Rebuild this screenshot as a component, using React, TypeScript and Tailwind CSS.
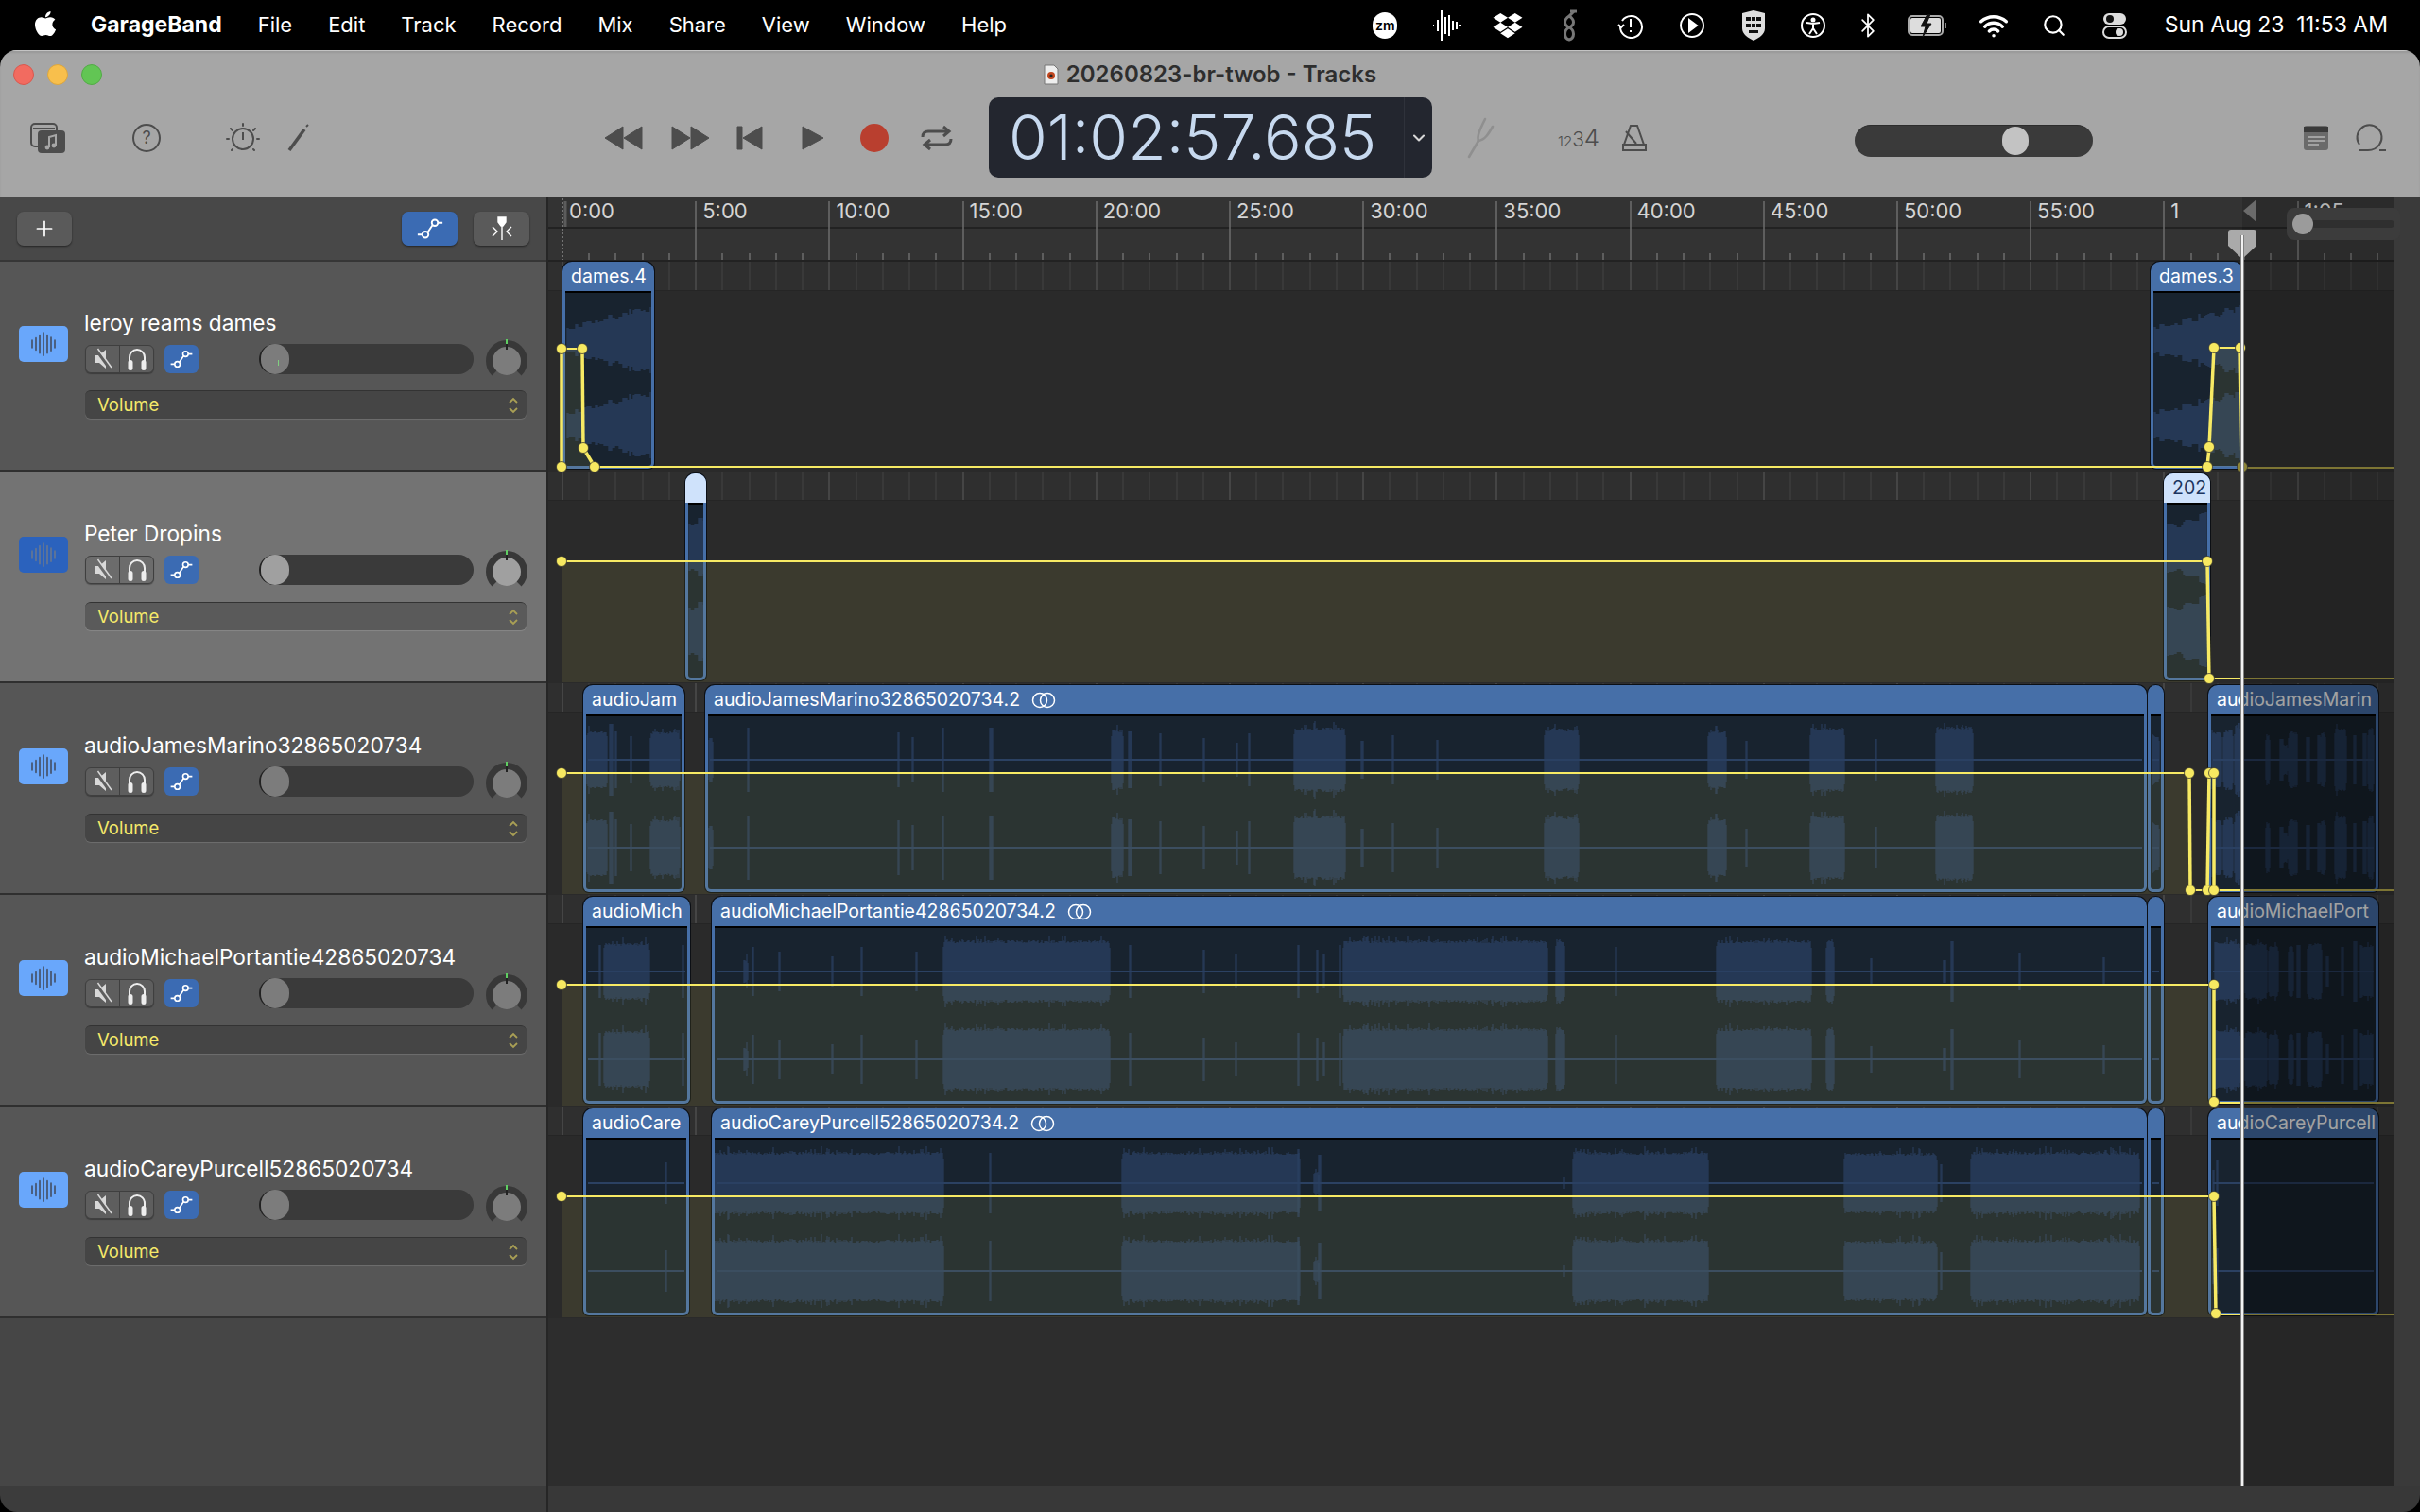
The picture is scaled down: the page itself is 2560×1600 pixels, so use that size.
import { FaApple, FaDropbox } from "react-icons/fa";
import { Bluetooth, Search, Wifi, Plus, ChevronDown } from "lucide-react";

const PLAYHEAD = 2372;
const CANVAS_LEFT = 580;
const CANVAS_RIGHT = 2533;

const WAVE = "#2b4162";

type Span = [number, number, number, number?];

type RegionData = {
  name: string;
  x: number;
  y: number;
  w: number;
  h: number;
  link?: boolean;
  selected?: boolean;
  centers?: [number, number];
  baseline?: boolean;
  blocky?: boolean;
  spans?: Span[];
};

function rng(seed: number) {
  let s = seed;
  return () => {
    s = (s * 16807) % 2147483647;
    return s / 2147483647;
  };
}

function wavePath(r: RegionData) {
  const [c1, c2] = r.centers ?? [79, 172];
  const rand = rng(r.x * 7 + r.y + 11);
  let d = "";
  for (const [a, b, amp0, amp1] of r.spans ?? []) {
    if (r.blocky) {
      // stepped look on the loud stems
      let x = a;
      while (x <= b) {
        const w = 2 + Math.floor(rand() * 4);
        const t = (x - a) / (b - a);
        const amp = amp1 === undefined ? amp0 : amp0 + (amp1 - amp0) * t;
        const top = Math.round(amp * (0.78 + rand() * 0.3));
        for (let i = 0; i < w && x + i <= b; i++) {
          d += `M${x + i} ${r.y + c1 - top}V${r.y + c1 + top}M${x + i} ${r.y + c2 - top}V${r.y + c2 + top}`;
        }
        x += w;
      }
      continue;
    }
    for (let x = a; x <= b; x += 1) {
      const big = b - a > 3;
      let top = amp0;
      if (big) {
        const edge = Math.min(1, Math.min(x - a, b - x) / 4 + 0.82);
        const n = rand();
        top = amp0 * edge * (0.9 + rand() * 0.1) + (n < 0.14 ? n * 50 : 0);
      }
      top = Math.round(top);
      d += `M${x} ${r.y + c1 - top}V${r.y + c1 + top}M${x} ${r.y + c2 - top}V${r.y + c2 + top}`;
    }
  }
  return d;
}

function spikes(xs: number[], amp: number): Span[] {
  return xs.map((x, i) => [x, x + 1, amp - (i % 3) * 5]);
}

// long regions were read off a crop scaled 1.005, bring the x values back
function unscale(spans: Span[]): Span[] {
  return spans.map(([a, b, c, d]) => [740 + Math.round((a - 740) / 1.005), 740 + Math.round((b - 740) / 1.005), c, d]);
}

const laneTops = [277, 499, 723, 947, 1171];

const lanes: RegionData[][] = [
  [
    { name: "dames.4", x: 595, y: 277, w: 97, h: 219, centers: [83, 173], blocky: true, spans: [[600, 688, 13, 38]] },
    { name: "dames.3", x: 2275, y: 277, w: 98, h: 219, centers: [83, 173], blocky: true, spans: [[2279, 2372, 14, 38]] },
  ],
  [
    { name: "", x: 725, y: 501, w: 22, h: 219, selected: true, centers: [78, 167], blocky: true, spans: [[729, 744, 24, 34]] },
    { name: "202", x: 2289, y: 501, w: 49, h: 219, selected: true, centers: [79, 167], blocky: true, spans: [[2293, 2334, 24, 38]] },
  ],
  [
    {
      name: "audioJam", x: 617, y: 725, w: 107, h: 219, baseline: true,
      spans: [[621, 642, 30], [645, 648, 38], ...spikes([651, 667], 30), [688, 719, 30]],
    },
    {
      name: "audioJamesMarino32865020734.2", x: 746, y: 725, w: 1525, h: 219, link: true, baseline: true,
      spans: unscale([
        [750, 754, 24],
        ...spikes([791, 951, 966, 998], 34),
        [1049, 1052, 34], [1178, 1190, 32], [1196, 1199, 30],
        ...spikes([1229, 1276, 1311, 1324], 28),
        [1372, 1426, 34], [1444, 1446, 20],
        ...spikes([1477, 1524], 26),
        [1638, 1675, 33], [1812, 1831, 31], [1853, 1854, 20],
        [1921, 1957, 34], [1990, 1991, 22], [2055, 2094, 35],
      ]),
    },
    { name: "", x: 2272, y: 725, w: 17, h: 219, baseline: true, spans: [[2277, 2284, 26]] },
    {
      name: "audioJamesMarin", x: 2336, y: 725, w: 180, h: 219, baseline: true,
      spans: [
        [2340, 2350, 30], [2352, 2362, 32], [2364, 2371, 36], [2397, 2401, 28],
        [2412, 2415, 22], [2416, 2420, 16], [2421, 2430, 30], [2440, 2443, 24],
        [2452, 2454, 26], [2455, 2460, 30], [2470, 2482, 34], [2490, 2492, 26],
        [2500, 2503, 28], [2505, 2511, 34],
      ],
    },
  ],
  [
    {
      name: "audioMich", x: 617, y: 949, w: 113, h: 219, baseline: true,
      spans: [[634, 635, 28], [639, 687, 30], [722, 723, 28]],
    },
    {
      name: "audioMichaelPortantie42865020734.2", x: 753, y: 949, w: 1518, h: 219, link: true, baseline: true,
      spans: unscale([
        [787, 791, 12],
        ...spikes([796, 824, 881, 912, 970], 26),
        [999, 1176, 33],
        ...spikes([1197, 1276, 1310, 1376, 1396, 1403, 1420], 28),
        [1424, 1641, 33], [1651, 1660, 34],
        ...spikes([1714], 26),
        [1821, 1922, 33], [1938, 1946, 34],
        [1985, 1986, 14],
        [2063, 2065, 12], [2071, 2073, 32],
        ...spikes([2143, 2232], 20),
      ]),
    },
    { name: "", x: 2272, y: 949, w: 17, h: 219, baseline: true },
    {
      name: "audioMichaelPort", x: 2336, y: 949, w: 180, h: 219, baseline: true,
      spans: [
        [2343, 2370, 32], [2375, 2398, 30], [2400, 2410, 28], [2421, 2426, 28],
        [2430, 2433, 28], [2441, 2456, 30], [2461, 2463, 16], [2477, 2479, 26],
        [2490, 2493, 32], [2497, 2510, 28],
      ],
    },
  ],
  [
    {
      name: "audioCare", x: 617, y: 1173, w: 112, h: 219, baseline: true,
      spans: [[704, 705, 22]],
    },
    {
      name: "audioCareyPurcell52865020734.2", x: 753, y: 1173, w: 1518, h: 219, link: true, baseline: true,
      spans: unscale([
        [755, 999, 33], [1049, 1050, 32],
        [1189, 1378, 33], [1376, 1377, 36], [1393, 1398, 12], [1398, 1400, 30],
        [1659, 1660, 6],
        [1669, 1812, 33], [1957, 2056, 32], [2060, 2061, 20], [2092, 2271, 33],
      ]),
    },
    { name: "", x: 2272, y: 1173, w: 17, h: 219, baseline: true },
    {
      name: "audioCareyPurcell", x: 2336, y: 1173, w: 180, h: 219, baseline: true,
      spans: [[2341, 2342, 14], [2345, 2346, 24]],
    },
  ],
];

// automation curves in page coordinates
const curves: number[][][] = [
  [[594, 494], [594, 369], [616, 369], [617, 474], [629, 494], [2335, 494], [2337, 473], [2342, 368], [2370, 368], [2372, 494]],
  [[594, 594], [2335, 594], [2337, 718]],
  [[594, 818], [2316, 818], [2317, 942], [2335, 942], [2337, 818], [2342, 818], [2342, 942]],
  [[594, 1042], [2342, 1042], [2342, 1166]],
  [[594, 1266], [2342, 1266], [2344, 1390]],
];

const tails: [number, number][] = [[2372, 495], [2337, 718], [2342, 942], [2342, 1167], [2344, 1391]];

const oliveAreas = [
  "594,369 616,369 617,474 629,496 594,496",
  "2342,368 2370,368 2372,494 2337,494",
  "594,594 2335,594 2337,722 594,722",
  "594,818 2316,818 2317,946 594,946",
  "594,1042 2342,1042 2342,1170 594,1170",
  "594,1266 2342,1266 2344,1394 594,1394",
];

const rulerLabels = ["0:00", "5:00", "10:00", "15:00", "20:00", "25:00", "30:00", "35:00", "40:00", "45:00", "50:00", "55:00", "1", "1:05"];

const tracks = [
  { name: "leroy reams dames" },
  { name: "Peter Dropins", selected: true },
  { name: "audioJamesMarino32865020734" },
  { name: "audioMichaelPortantie42865020734" },
  { name: "audioCareyPurcell52865020734" },
];

const tickXs: { x: number; major: boolean }[] = [];
for (let i = 0; i < 70; i++) {
  const x = 15 + i * 28.24;
  if (x < CANVAS_RIGHT - CANVAS_LEFT) tickXs.push({ x: Math.round(x), major: i % 5 === 0 });
}

function AutoIcon({ size = 24 }: { size?: number }) {
  return (
    <svg width={size} height={size} viewBox="0 0 24 24" fill="none" stroke="white" strokeWidth="1.5">
      <circle cx="8" cy="17" r="2.6" />
      <circle cx="16" cy="7" r="2.6" />
      <path d="M1.5 17H5.4M10 15L14 9M18.6 7H22.5" />
    </svg>
  );
}

function WaveIcon({ color }: { color: string }) {
  const bars = [[5, 6], [9, 10], [13, 15], [17, 19], [21, 15], [25, 11], [29, 6]];
  return (
    <svg width="34" height="26" viewBox="0 0 34 26" stroke={color} strokeWidth="2" strokeLinecap="round">
      {bars.map(([x, h]) => (
        <path key={x} d={`M${x} ${13 - h / 1.6}V${13 + h / 1.6}`} />
      ))}
    </svg>
  );
}

function MenuBar() {
  return (
    <div className="h-[53px] shrink-0 bg-black text-white flex items-center justify-between pl-[34px] pr-[34px] text-[22px]">
      <div className="flex items-center">
        <FaApple className="w-[28px] h-[30px] -mt-[4px]" />
        <span className="ml-[34px] font-bold text-[23px]">GarageBand</span>
        <div className="flex gap-[38px] ml-[38px]">
          {["File", "Edit", "Track", "Record", "Mix", "Share", "View", "Window", "Help"].map((m) => (
            <span key={m}>{m}</span>
          ))}
        </div>
      </div>
      <div className="flex items-center">
        <div className="w-[65px] flex justify-center">
          <div className="w-[26px] h-[28px] rounded-full bg-white text-black text-[14px] font-semibold flex items-center justify-center">zm</div>
        </div>
        <div className="w-[65px] flex justify-center">
          <svg width="32" height="34" viewBox="0 0 32 34" stroke="white" strokeWidth="2">
            <path d="M2 17H3M7 11V23M11 1V33M15 8V26M19 6V28M23 12V22M27 13V21M30 16V18" />
          </svg>
        </div>
        <div className="w-[65px] flex justify-center">
          <FaDropbox className="w-[34px] h-[30px]" />
        </div>
        <div className="w-[65px] flex justify-center">
          <svg width="22" height="36" viewBox="0 0 22 36" fill="none" stroke="#777" strokeWidth="3">
            <path d="M16 3L11 8C5 12 5 17 11 20C17 23 17 31 11 33C5 31 5 23 11 20C17 17 17 12 11 8" />
            <path d="M12 3H19" />
          </svg>
        </div>
        <div className="w-[65px] flex justify-center">
          <svg width="28" height="28" viewBox="0 0 28 28" fill="none" stroke="white" strokeWidth="2">
            <path d="M5 9A11.5 11.5 0 1 1 3 15" />
            <path d="M1 13L4 16L7 13" />
            <path d="M14 7V16M14 19V21" />
          </svg>
        </div>
        <div className="w-[65px] flex justify-center">
          <svg width="28" height="28" viewBox="0 0 28 28" fill="none" stroke="white" strokeWidth="2">
            <circle cx="14" cy="14" r="12" />
            <path d="M11 8L19 14L11 20Z" fill="white" />
          </svg>
        </div>
        <div className="w-[65px] flex justify-center">
          <svg width="28" height="32" viewBox="0 0 28 32">
            <path d="M14 0L26 3V19C26 25 20 29 14 32C8 29 2 25 2 19V3Z" fill="#ddd" />
            <path d="M6 7H11V11H6ZM12 7H16V11H12ZM17 7H22V11H17ZM6 14H11V18H6ZM17 14H22V18H17ZM12 14H16V18H12ZM9 21H19V24H9Z" fill="#111" />
          </svg>
        </div>
        <div className="w-[60px] flex justify-center">
          <svg width="28" height="28" viewBox="0 0 28 28" fill="none" stroke="white" strokeWidth="2">
            <circle cx="14" cy="14" r="12" />
            <circle cx="14" cy="8" r="1.5" fill="white" />
            <path d="M7 11L14 12L21 11M14 12V17L10 23M14 17L18 23" />
          </svg>
        </div>
        <div className="w-[56px] flex justify-center">
          <Bluetooth className="w-[28px] h-[30px]" strokeWidth={1.5} />
        </div>
        <div className="w-[72px] flex justify-center">
          <svg width="44" height="24" viewBox="0 0 44 24" fill="none">
            <rect x="1" y="2" width="36" height="20" rx="4" stroke="#aaa" strokeWidth="2" />
            <rect x="3" y="4" width="32" height="16" rx="2" fill="#ddd" />
            <path d="M21 0L14 13H19L16 24L25 10H20L24 0Z" fill="#111" stroke="#111" />
            <path d="M40 9V15" stroke="#888" strokeWidth="2" />
          </svg>
        </div>
        <div className="w-[66px] flex justify-center">
          <Wifi className="w-[32px] h-[32px]" strokeWidth={2.6} />
        </div>
        <div className="w-[62px] flex justify-center">
          <Search className="w-[26px] h-[26px]" strokeWidth={2} />
        </div>
        <div className="w-[66px] flex justify-center">
          <svg width="26" height="28" viewBox="0 0 26 28">
            <rect x="1" y="1" width="24" height="12" rx="6" fill="#ddd" />
            <circle cx="8" cy="7" r="4" fill="#111" />
            <rect x="1" y="15" width="24" height="12" rx="6" fill="none" stroke="#ddd" strokeWidth="2" />
            <circle cx="18" cy="21" r="4" fill="#ddd" />
          </svg>
        </div>
        <span className="ml-[20px] whitespace-nowrap text-[23px]">Sun Aug 23&nbsp; 11:53 AM</span>
      </div>
    </div>
  );
}

function Toolbar() {
  return (
    <div className="h-[155px] shrink-0 bg-[#a6a6a6] border-t border-[#c4c4c4] shadow-[inset_0_2px_2px_rgba(0,0,0,0.08)]">
      <div className="relative h-[49px] flex items-center justify-center">
        <div className="absolute left-[14px] top-[14px] flex gap-[14px]">
          <div className="w-[22px] h-[22px] rounded-full bg-[#f26b60] border border-[#d9584e]" />
          <div className="w-[22px] h-[22px] rounded-full bg-[#f8bf4c] border border-[#dca63e]" />
          <div className="w-[22px] h-[22px] rounded-full bg-[#62c554] border border-[#52ab46]" />
        </div>
        <div className="flex items-center gap-[8px] text-[24px] font-semibold text-[#2e2e2e]">
          <svg width="16" height="22" viewBox="0 0 16 22">
            <path d="M1 1H11L15 5V21H1Z" fill="#eee" stroke="#777" />
            <circle cx="8" cy="12" r="4" fill="#c0461e" />
            <circle cx="8" cy="12" r="1.6" fill="#222" />
          </svg>
          <span>20260823-br-twob - Tracks</span>
        </div>
      </div>
      <div className="h-[85px] flex items-center pl-[32px] text-[#4d4d4d]">
        <svg width="38" height="32" viewBox="0 0 38 32" fill="none" className="shrink-0">
          <rect x="1" y="1" width="27" height="24" rx="4" stroke="#4d4d4d" strokeWidth="2" />
          <path d="M3 6H26" stroke="#4d4d4d" strokeWidth="2" />
          <rect x="8" y="8" width="29" height="24" rx="4" fill="#4d4d4d" />
          <path d="M20 26V15L27 13V24" stroke="#a6a6a6" strokeWidth="2" />
          <circle cx="18" cy="26" r="2.4" fill="#a6a6a6" />
          <circle cx="25" cy="24" r="2.4" fill="#a6a6a6" />
        </svg>
        <div className="ml-[70px] w-[30px] h-[30px] rounded-full border-2 border-[#4d4d4d] flex items-center justify-center text-[18px] shrink-0">?</div>
        <svg width="36" height="32" viewBox="0 0 36 32" fill="none" stroke="#4d4d4d" strokeWidth="2" className="ml-[69px] shrink-0">
          <circle cx="18" cy="17" r="11" />
          <path d="M18 10V18" />
          <path d="M18 1V3M5 6L7 8M31 6L29 8M1 17H3M33 17H35M6 29L7 28M30 29L29 28" strokeLinecap="round" />
        </svg>
        <svg width="24" height="30" viewBox="0 0 24 30" fill="none" stroke="#4d4d4d" className="ml-[29px] shrink-0">
          <path d="M2 28L18 6" strokeWidth="3.5" />
          <path d="M20 3L22 1" strokeWidth="2" />
        </svg>
        <svg width="44" height="26" viewBox="0 0 44 26" fill="#4d4d4d" className="ml-[310px] shrink-0">
          <path d="M2 13L21 1V25ZM22 13L41 1V25Z" stroke="#4d4d4d" strokeLinejoin="round" />
        </svg>
        <svg width="44" height="26" viewBox="0 0 44 26" fill="#4d4d4d" className="ml-[26px] shrink-0">
          <path d="M42 13L23 1V25ZM22 13L3 1V25Z" stroke="#4d4d4d" strokeLinejoin="round" />
        </svg>
        <svg width="28" height="26" viewBox="0 0 28 26" fill="#4d4d4d" className="ml-[27px] shrink-0">
          <path d="M1 1H6V25H1ZM7 13L27 1V25Z" stroke="#4d4d4d" strokeLinejoin="round" />
        </svg>
        <svg width="24" height="26" viewBox="0 0 24 26" fill="#4d4d4d" className="ml-[41px] shrink-0">
          <path d="M1 1L23 13L1 25Z" stroke="#4d4d4d" strokeLinejoin="round" />
        </svg>
        <div className="ml-[38px] w-[30px] h-[30px] rounded-full bg-[#b93f2f] shrink-0" />
        <svg width="34" height="28" viewBox="0 0 34 28" fill="none" stroke="#4d4d4d" strokeWidth="3" className="ml-[34px] shrink-0">
          <path d="M2 13C2 9 4 7 8 7H28M24 2L30 7L24 12" />
          <path d="M32 15C32 19 30 21 26 21H6M10 16L4 21L10 26" />
        </svg>
        <div className="ml-[38px] w-[469px] h-[85px] shrink-0 rounded-[10px] bg-[#23262f] flex items-stretch">
          <span className="w-[439px] pl-[21px] leading-[85px] text-[66px] font-light text-[#c7d9ef] whitespace-nowrap">01:02:57.685</span>
          <div className="flex-1 border-l border-[#2f323b] flex items-center justify-center text-[#d8d8d8]">
            <ChevronDown className="w-[20px] h-[20px]" strokeWidth={2.5} />
          </div>
        </div>
        <svg width="30" height="44" viewBox="0 0 30 44" fill="none" stroke="#8f8f8f" strokeWidth="2.6" strokeLinecap="round" className="ml-[36px] shrink-0">
          <path d="M3 42L13 25" />
          <path d="M13 25C11 20 15 12 20 2" />
          <path d="M13 25C20 24 24 17 28 10" />
        </svg>
        <span className="ml-[67px] w-[46px] shrink-0 text-[#4d4d4d] whitespace-nowrap font-light">
          <span className="text-[15px]">12</span>
          <span className="text-[21px]">3</span>
          <span className="text-[26px]">4</span>
        </span>
        <svg width="28" height="30" viewBox="0 0 28 30" fill="none" stroke="#4d4d4d" strokeWidth="2" className="ml-[21px] shrink-0">
          <path d="M10 2H17L24 22H3Z" />
          <path d="M2 22H26V28H2Z" />
          <path d="M5 8L16 21" />
        </svg>
        <div className="ml-[219px] mt-[7px] w-[252px] h-[34px] shrink-0 rounded-full bg-[#3a3a3a] border-t border-[#2c2c2c] relative">
          <div className="absolute left-[156px] top-[1px] w-[28px] h-[30px] rounded-full bg-[#c3c3c3]" />
        </div>
        <svg width="28" height="28" viewBox="0 0 28 28" className="ml-[222px] shrink-0">
          <rect x="1" y="1" width="26" height="26" rx="3" fill="#6a6a6a" />
          <path d="M1 5H27" stroke="#3a3a3a" strokeWidth="6" />
          <path d="M5 13H23M5 17H23M5 21H17" stroke="#b5b5b5" strokeWidth="1.5" />
        </svg>
        <svg width="34" height="30" viewBox="0 0 34 30" fill="none" stroke="#4d4d4d" strokeWidth="2" className="ml-[27px] shrink-0">
          <path d="M5 22A13 13 0 1 1 26 22C24 25 20 28 14 28H4M26 28H33" />
        </svg>
      </div>
    </div>
  );
}

function Chevrons() {
  return (
    <svg width="12" height="20" viewBox="0 0 12 20" fill="none" stroke="#a99f55" strokeWidth="1.8">
      <path d="M2 7L6 3L10 7M2 13L6 17L10 13" />
    </svg>
  );
}

function TrackHeader({ name, selected, first }: { name: string; selected?: boolean; first: boolean }) {
  const knob = selected ? "bg-[#a0a0a0]" : "bg-[#7c7c7c]";
  return (
    <div
      className={`flex items-start pl-[20px] border-b-2 border-[#2f2f2f] ${first ? "h-[222px]" : "h-[224px]"} ${
        selected ? "bg-[#737373]" : "bg-[#565656]"
      }`}
    >
      <div
        className={`w-[52px] h-[38px] rounded-[5px] flex items-center justify-center ${first ? "mt-[68px]" : "mt-[69px]"} ${
          selected ? "bg-[#2b62bd]" : "bg-[#69a7fb]"
        }`}
      >
        <WaveIcon color={selected ? "#5c7399" : "#4a5f80"} />
      </div>
      <div className={`ml-[17px] w-[469px] ${first ? "pt-[50px]" : "pt-[51px]"}`}>
        <div className="h-[30px] leading-[30px] text-[22.7px] text-white whitespace-nowrap">{name}</div>
        <div className="mt-[7px] h-[32px] flex items-center pl-[1px]">
          <div className={`flex h-[30px] w-[73px] rounded-[6px] border border-[#3f3f3f] shadow-[0_1px_1px_rgba(0,0,0,0.3)] ${selected ? "bg-[#6c6c6c]" : "bg-[#5e5e5e]"}`}>
            <div className="w-[36px] flex items-center justify-center border-r border-[#3f3f3f]">
              <svg width="22" height="26" viewBox="0 0 22 26" fill="none">
                <path d="M2 9H7L14 3V23L7 17H2Z" fill="#d8d8d8" />
                <path d="M3 2L19 24" stroke={selected ? "#6c6c6c" : "#5e5e5e"} strokeWidth="3.5" />
                <path d="M5.5 2L20 22" stroke="#d8d8d8" strokeWidth="1.5" />
              </svg>
            </div>
            <div className="flex-1 flex items-center justify-center">
              <svg width="22" height="26" viewBox="0 0 22 26" fill="none" stroke="#eee" strokeWidth="2">
                <path d="M3 18V11A8 8 0 0 1 19 11V18" />
                <rect x="2.5" y="15" width="3" height="9" rx="1.5" fill="#eee" />
                <rect x="16.5" y="15" width="3" height="9" rx="1.5" fill="#eee" />
              </svg>
            </div>
          </div>
          <div className="ml-[11px] w-[36px] h-[30px] rounded-[6px] bg-[#3b6bb3] flex items-center justify-center">
            <AutoIcon size={26} />
          </div>
          <div className="ml-[64px] w-[227px] h-[32px] rounded-full bg-[#3a3a3a] border-l-2 border-[#222]">
            <div className={`relative w-[30px] h-[32px] rounded-full ${knob}`}>
              {first && <div className="absolute left-[18px] top-[17px] w-[1px] h-[6px] bg-[#7fd07f]" />}
            </div>
          </div>
          <div className="ml-[13px] w-[44px] h-[44px] -my-[6px] flex items-center justify-center relative">
            <svg width="44" height="44" viewBox="0 0 44 44" className="absolute inset-0" fill="none">
              <path d="M9.3 36.7A18 18 0 1 1 34.7 36.7" stroke="#383838" strokeWidth="8" />
            </svg>
            <div className={`relative w-[30px] h-[30px] rounded-full mt-[3px] ${knob}`} />
            <div className="absolute top-[1px] left-[21px] w-[2px] h-[5px] bg-[#5fce62]" />
            <div className="absolute top-[6px] left-[21px] w-[2px] h-[6px] bg-[#222]" />
          </div>
        </div>
        <div
          className={`ml-[1px] w-[467px] h-[30px] rounded-[6px] border-t border-[#333] flex items-center justify-between pl-[13px] pr-[8px] text-[18.5px] text-[#f5e96a] shadow-[0_1px_1px_rgba(255,255,255,0.15)] ${
            first ? "mt-[17px]" : "mt-[18px]"
          } ${selected ? "bg-[#5a5a5a]" : "bg-[#454545]"}`}
        >
          <span>Volume</span>
          <Chevrons />
        </div>
      </div>
    </div>
  );
}

function Sidebar() {
  return (
    <div className="w-[580px] shrink-0 flex flex-col border-r-2 border-[#262626]">
      <div className="h-[69px] shrink-0 bg-[#484848] border-b-2 border-[#363636] flex items-center pl-[18px] pr-[18px]">
        <button className="w-[58px] h-[36px] rounded-[7px] bg-[#5a5a5a] shadow-[0_1px_2px_rgba(0,0,0,0.5)] flex items-center justify-center text-white">
          <Plus className="w-[26px] h-[26px]" strokeWidth={1.6} />
        </button>
        <button className="ml-auto w-[59px] h-[36px] rounded-[7px] bg-[#3b6bb3] shadow-[0_1px_2px_rgba(0,0,0,0.5)] flex items-center justify-center">
          <AutoIcon size={30} />
        </button>
        <button className="ml-[17px] w-[59px] h-[36px] rounded-[7px] bg-[#5a5a5a] shadow-[0_1px_2px_rgba(0,0,0,0.5)] flex items-center justify-center">
          <svg width="24" height="26" viewBox="0 0 24 26" fill="none" stroke="white" strokeWidth="1.4">
            <path d="M8 1H16V6L13 10H11L8 6Z" fill="white" />
            <path d="M12 10V25M2 11L7 16L2 21M22 11L17 16L22 21" />
          </svg>
        </button>
      </div>
      {tracks.map((t, i) => (
        <TrackHeader key={t.name} name={t.name} selected={t.selected} first={i === 0} />
      ))}
      <div className="flex-1 bg-[#464646]" />
      <div className="h-[27px] shrink-0 bg-[#3c3c3c]" />
    </div>
  );
}

function Ruler() {
  return (
    <div className="relative h-[69px] shrink-0 bg-[#333333] border-b-2 border-[#222]">
      <div className="flex h-[34px] pl-[15px] border-b-2 border-[#222] overflow-hidden text-[22px] text-[#d4d4d4]">
        {rulerLabels.map((l) => (
          <div key={l} className="w-[141.2px] shrink-0 pl-[7px] leading-[30px]">
            {l}
          </div>
        ))}
      </div>
      <svg className="absolute inset-0" width="1953" height="69">
        <path d="M15 2V67" stroke="#8a8a8a" strokeWidth="1.5" strokeDasharray="2 2" />
        <path d="M18 5V32" stroke="#5c5c5c" strokeWidth="3" />
        {tickXs.slice(1).map((t) => (
          <path key={t.x} d={t.major ? `M${t.x} 5V67` : `M${t.x} 60V67`} stroke="#6e6e6e" strokeWidth="1.5" />
        ))}
      </svg>
    </div>
  );
}

function Region({ r, laneTop }: { r: RegionData; laneTop: number }) {
  const bodyX = r.x + 3;
  const bodyW = r.w - 6;
  const [c1, c2] = r.centers ?? [79, 172];
  const overPlayhead = r.x + r.w > PLAYHEAD + 1;
  return (
    <div
      className="absolute flex flex-col rounded-t-[10px] rounded-b-[6px] overflow-hidden bg-[#466fa8] ring-1 ring-[#0c0f14]"
      style={{ left: r.x - CANVAS_LEFT, top: r.y - laneTop, width: r.w, height: r.h }}
    >
      <div
        className={`h-[31px] shrink-0 flex items-center gap-[12px] pl-[9px] text-[19.5px] overflow-hidden whitespace-nowrap ${
          r.selected ? "bg-[#cfe2fb] text-[#1c3560]" : "text-white"
        }`}
      >
        <span>{r.name}</span>
        {r.link && (
          <svg width="26" height="18" viewBox="0 0 26 18" fill="none" stroke="white" strokeWidth="1.5" className="shrink-0">
            <circle cx="9" cy="9" r="7.5" />
            <circle cx="17" cy="9" r="7.5" />
          </svg>
        )}
      </div>
      <div className="flex-1 mx-[3px] mb-[3px] bg-[#18232f] border-t-2 border-black rounded-b-[3px] overflow-hidden">
        <svg width={bodyW} height={r.h - 36} viewBox={`${bodyX} ${r.y + 33} ${bodyW} ${r.h - 36}`} className="block">
          {r.baseline && (
            <path d={`M${bodyX + 2} ${r.y + c1}H${bodyX + bodyW - 2}M${bodyX + 2} ${r.y + c2}H${bodyX + bodyW - 2}`} stroke={WAVE} strokeWidth="2" />
          )}
          <path d={wavePath(r)} stroke={WAVE} strokeWidth="1" />
        </svg>
      </div>
      {overPlayhead && (
        <div className="absolute inset-y-0 right-0 bg-black/25" style={{ left: PLAYHEAD - r.x }} />
      )}
    </div>
  );
}

function Lane({ top, height, regions }: { top: number; height: number; regions: RegionData[] }) {
  return (
    <div className="relative shrink-0 bg-[#2a2a2a]" style={{ height }}>
      <svg className="block" width="1953" height="31">
        <rect width="1953" height="31" fill="#2f2f2f" />
        <path d="M0 30.5H1953" stroke="#252525" />
        {tickXs.map((t) => (
          <path key={t.x} d={`M${t.x} 0V30`} stroke={t.major ? "#4e4e4e" : "#3e3e3e"} strokeWidth="1.5" />
        ))}
      </svg>
      {regions.map((r) => (
        <Region key={`${r.x}-${r.name}`} r={r} laneTop={top} />
      ))}
    </div>
  );
}

function Automation() {
  return (
    <svg className="absolute inset-0 pointer-events-none" width="1953" height="1365" viewBox="580 208 1953 1365">
      {oliveAreas.map((p) => (
        <polygon key={p} points={p} fill="#c4bb4e" fillOpacity="0.11" />
      ))}
      {curves.map((pts, i) => (
        <g key={i}>
          {pts.slice(1).map((p, j) => {
            const q = pts[j];
            const steep = Math.abs(p[1] - q[1]) > Math.abs(p[0] - q[0]);
            return (
              <line key={j} x1={q[0]} y1={q[1]} x2={p[0]} y2={p[1]} stroke="#f7ea64" strokeWidth={steep ? 3.5 : 2} />
            );
          })}
          <path d={`M${tails[i][0]} ${tails[i][1]}H${PLAYHEAD}`} stroke="#f7ea64" strokeWidth="2" />
          <path d={`M${PLAYHEAD} ${tails[i][1]}H${CANVAS_RIGHT}`} stroke="#7d7534" strokeWidth="2" />
          {pts.map((p, j) => (
            <ellipse key={j} cx={p[0]} cy={p[1]} rx="5.5" ry="5.5" fill={p[0] >= PLAYHEAD ? "#8d8537" : "#f7e961"} stroke="#2a2a2a" strokeWidth="0.7" />
          ))}
        </g>
      ))}
    </svg>
  );
}

function Playhead() {
  return (
    <svg className="absolute top-0 pointer-events-none" style={{ left: PLAYHEAD - CANVAS_LEFT - 16 }} width="32" height="1365" viewBox="0 0 32 1365">
      <path d="M31 3V27L17 15Z" fill="#6b6b6b" />
      <path d="M4 35H28Q31 35 31 38V52L16 66L1 52V38Q1 35 4 35Z" fill="#aaaaaa" />
      <path d="M16 41V1365" stroke="#5a5a5a" strokeWidth="4" />
      <path d="M16 41V1365" stroke="#f2f2f2" strokeWidth="2.5" />
    </svg>
  );
}

function Arrange() {
  return (
    <div className="flex-1 flex flex-col relative">
      <div className="flex-1 flex min-h-0">
        <div className="w-[1953px] shrink-0 relative bg-[#2d2d2d] flex flex-col">
          <Ruler />
          {lanes.map((regions, i) => (
            <Lane key={i} top={laneTops[i]} height={(laneTops[i + 1] ?? 1395) - laneTops[i]} regions={regions} />
          ))}
          <div
            className="absolute top-0 bottom-0 right-0 bg-black/15"
            style={{ left: PLAYHEAD - CANVAS_LEFT }}
          />
          <Automation />
          <Playhead />
        </div>
        <div className="flex-1 bg-[#3a3a3a]" />
      </div>
      <div className="h-[27px] shrink-0 bg-[#383838]" />
      <div className="absolute right-[21px] top-[12px] w-[120px] h-[34px] rounded-[8px] bg-[#3c3c3c] flex items-center pl-[6px] pr-[6px]">
        <div className="w-full h-[8px] rounded-full bg-[#2f2f2f] relative flex items-center">
          <div className="w-[22px] h-[22px] rounded-full bg-[#9b9b9b] shrink-0" />
        </div>
      </div>
    </div>
  );
}

export default function App() {
  return (
    <div className="w-[2560px] h-[1600px] bg-black flex flex-col overflow-hidden [font-family:Inter,sans-serif]">
      <MenuBar />
      <div className="flex-1 flex flex-col rounded-[18px] overflow-hidden">
        <Toolbar />
        <div className="flex-1 flex min-h-0">
          <Sidebar />
          <Arrange />
        </div>
      </div>
    </div>
  );
}
